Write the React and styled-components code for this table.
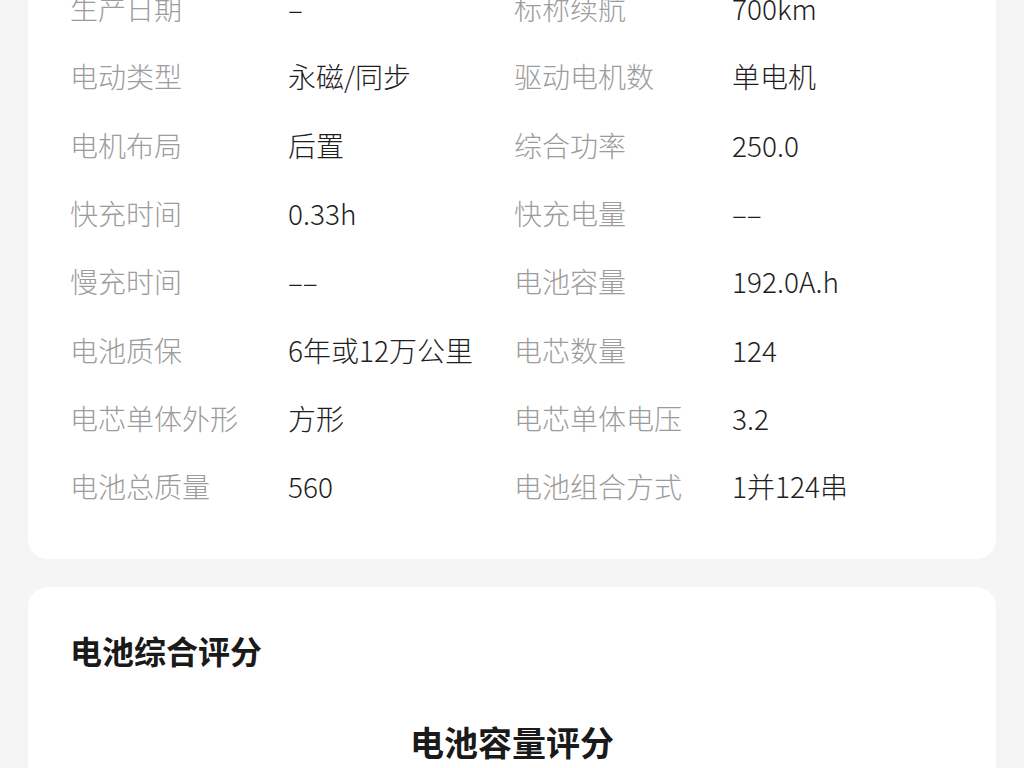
import React from 'react'
import styled, { createGlobalStyle } from 'styled-components'

const GlobalStyle = createGlobalStyle`
    html, body {
        margin: 0;
        padding: 0;
        background: #f5f5f5;
        overflow: hidden;
    }
    body {
        font-family: "Noto Sans CJK SC", "Noto Sans", sans-serif;
    }
`

const specs = [
    ["生产日期", "–", "标称续航", "700km"],
    ["电动类型", "永磁/同步", "驱动电机数", "单电机"],
    ["电机布局", "后置", "综合功率", "250.0"],
    ["快充时间", "0.33h", "快充电量", "––"],
    ["慢充时间", "––", "电池容量", "192.0A.h"],
    ["电池质保", "6年或12万公里", "电芯数量", "124"],
    ["电芯单体外形", "方形", "电芯单体电压", "3.2"],
    ["电池总质量", "560", "电池组合方式", "1并124串"],
]

const App = () => {
    return (
        <>
            <GlobalStyle />
            <StyledPage>
                <StyledSpecCard>
                    <StyledSpecGrid>
                        {specs.map((row, i) => (
                            <React.Fragment key={i}>
                                <StyledLabel>{row[0]}</StyledLabel>
                                <StyledValue>{row[1]}</StyledValue>
                                <StyledLabel>{row[2]}</StyledLabel>
                                <StyledValue>{row[3]}</StyledValue>
                            </React.Fragment>
                        ))}
                    </StyledSpecGrid>
                </StyledSpecCard>

                <StyledScoreCard>
                    <StyledScoreTitle>电池综合评分</StyledScoreTitle>
                    <StyledScoreSubTitle>电池容量评分</StyledScoreSubTitle>
                </StyledScoreCard>
            </StyledPage>
        </>
    )
}


const StyledPage = styled.div`
    display: flex;
    flex-direction: column;
    gap: 28px;
    padding: 0 28px 0 28px;
    margin-top: -26px;
`

const StyledSpecCard = styled.div`
    background: #ffffff;
    border-radius: 0 0 20px 20px;
    padding: 0 42px 39px 42px;
`

const StyledSpecGrid = styled.div`
    display: grid;
    grid-template-columns: 218px 226px 218px 1fr;
    grid-auto-rows: 68.3px;
    align-items: center;
`

const StyledLabel = styled.div`
    font-size: 28px;
    font-weight: 300;
    color: #9c9c9c;
    white-space: nowrap;
    line-height: 40px;
`

const StyledValue = styled.div`
    font-size: 28px;
    font-weight: 300;
    color: #1e1e1e;
    white-space: nowrap;
    line-height: 40px;
`

const StyledScoreCard = styled.div`
    background: #ffffff;
    border-radius: 20px 20px 0 0;
    padding: 41px 42px 40px 42px;
    display: flex;
    flex-direction: column;
`

const StyledScoreTitle = styled.div`
    font-size: 32px;
    font-weight: 700;
    color: #1a1a1a;
    line-height: 44px;
`

const StyledScoreSubTitle = styled.div`
    margin-top: 48px;
    font-size: 34px;
    font-weight: 700;
    color: #1a1a1a;
    line-height: 44px;
    text-align: center;
`


export default App
